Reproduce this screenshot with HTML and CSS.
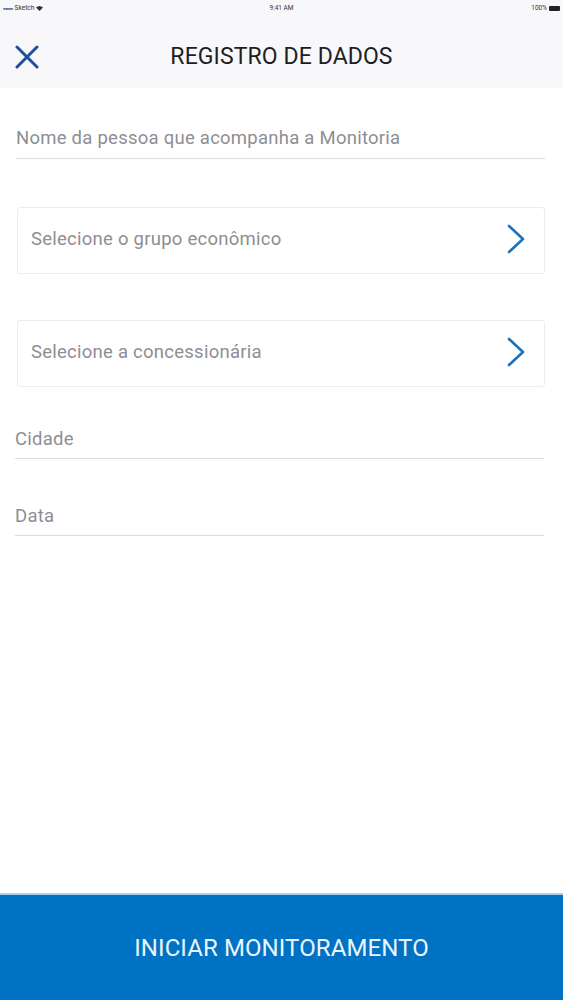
FILE: index.html
```html
<!DOCTYPE html>
<html lang="pt">
<head>
<meta charset="utf-8">
<title>Registro de Dados</title>
<link rel="stylesheet" href="styles.css">
</head>
<body>
<div class="page">
  <div class="status">
    <div class="status-left">
      <span class="dots">●●●●●</span>
      <span>Sketch</span>
      <svg class="wifi" width="7" height="5" viewBox="0 0 14 10"><path d="M7 10 L0 3 Q7 -3 14 3 Z" fill="#333"/></svg>
    </div>
    <div class="status-center">9:41 AM</div>
    <div class="status-right">
      <span>100%</span>
      <span class="battery"></span>
    </div>
  </div>
  <header class="header">
    <button class="close" aria-label="Fechar">
      <svg width="24" height="24" viewBox="0 0 24 24"><path d="M2 2 L22 22 M22 2 L2 22" stroke="#1d4f9c" stroke-width="3" stroke-linecap="round" fill="none"/></svg>
    </button>
    <h1 class="title">REGISTRO DE DADOS</h1>
    <div></div>
  </header>
  <main class="form">
    <div class="field field-first">Nome da pessoa que acompanha a Monitoria</div>
    <div class="card card-first">
      <span>Selecione o grupo econômico</span>
      <svg class="chev" width="18" height="30" viewBox="0 0 18 30"><path d="M2 2 L16 15 L2 28" stroke="#1b72bd" stroke-width="2.6" stroke-linecap="round" stroke-linejoin="round" fill="none"/></svg>
    </div>
    <div class="card card-second">
      <span>Selecione a concessionária</span>
      <svg class="chev" width="18" height="30" viewBox="0 0 18 30"><path d="M2 2 L16 15 L2 28" stroke="#1b72bd" stroke-width="2.6" stroke-linecap="round" stroke-linejoin="round" fill="none"/></svg>
    </div>
    <div class="field field-city">Cidade</div>
    <div class="field field-date">Data</div>
  </main>
  <button class="cta">INICIAR MONITORAMENTO</button>
</div>
</body>
</html>
```

FILE: styles.css
```css
* { box-sizing: border-box; }
html, body { margin: 0; padding: 0; }
body {
  font-family: Roboto, "Liberation Sans", sans-serif;
  background: #ffffff;
}
.page {
  min-height: 1000px;
  display: flex;
  flex-direction: column;
}
.status {
  height: 16px;
  background: #f8f7fa;
  display: grid;
  grid-template-columns: 1fr auto 1fr;
  align-items: center;
  padding: 0 3px;
  font-size: 6.5px;
  color: #333;
}
.status-left { display: flex; align-items: center; gap: 2px; }
.dots { font-size: 4px; letter-spacing: -0.5px; }
.status-right { display: flex; justify-content: flex-end; align-items: center; gap: 2px; }
.battery {
  width: 11px;
  height: 5px;
  background: #222;
  border-radius: 1px;
}
.header {
  height: 72px;
  background: #f8f7fa;
  display: grid;
  grid-template-columns: 1fr auto 1fr;
  align-items: center;
  padding: 9px 0 0 0;
}
.close {
  background: none;
  border: 0;
  padding: 0;
  margin-left: 15px;
  width: 24px;
  height: 24px;
  justify-self: start;
  display: flex;
}
.title {
  margin: 0;
  font-weight: 400;
  font-size: 23px;
  color: #1e1e1e;
  letter-spacing: 0.1px;
}
.form {
  display: flex;
  flex-direction: column;
}
.field {
  font-size: 18.5px;
  line-height: 24px;
  color: #8e8e93;
  border-bottom: 1px solid #dcdcdf;
  padding-bottom: 7px;
  letter-spacing: 0.25px;
}
.field-first { margin: 38px 18px 0 16px; padding-bottom: 8px; }
.field-city { margin: 40px 19px 0 15px; }
.field-date { margin: 45px 19px 0 15px; }
.card {
  height: 67px;
  margin: 0 18px 0 17px;
  border: 1px solid #ececee;
  border-radius: 3px;
  display: flex;
  align-items: center;
  justify-content: space-between;
  padding: 0 19px 3px 13px;
  font-size: 18.5px;
  color: #8e8e93;
  letter-spacing: 0.25px;
}
.card-first { margin-top: 48px; }
.card-second { margin-top: 46px; }
.chev { display: block; }
.cta {
  margin-top: auto;
  height: 107px;
  border: 0;
  border-top: 2px solid #a9d0ef;
  background: #0072c3;
  color: #eaf5ff;
  font-family: Roboto, "Liberation Sans", sans-serif;
  font-size: 24px;
  letter-spacing: 0.1px;
  width: 100%;
  padding: 0;
}
```
